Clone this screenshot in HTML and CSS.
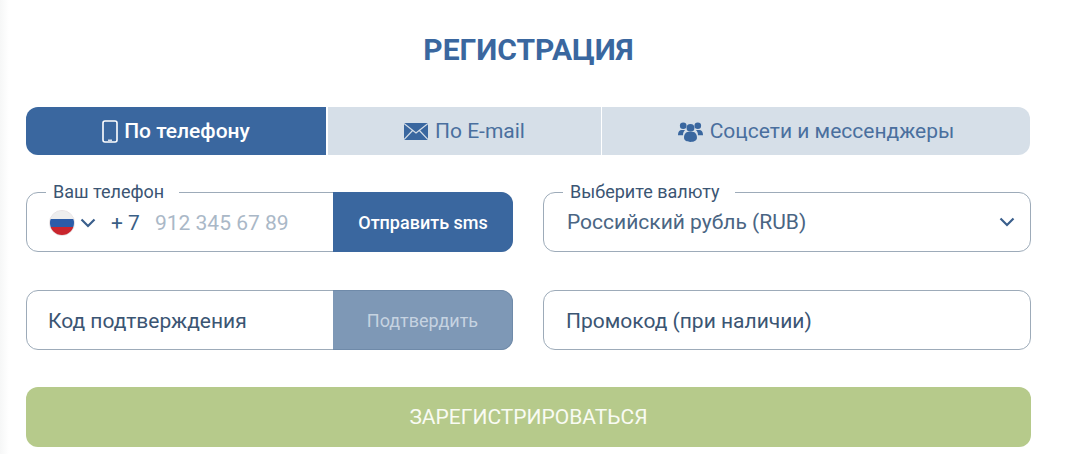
FILE: index.html
```html
<!DOCTYPE html>
<html lang="ru">
<head>
<meta charset="utf-8">
<title>Регистрация</title>
<link rel="stylesheet" href="styles.css">
</head>
<body>
<main class="form">
  <h1 class="title">РЕГИСТРАЦИЯ</h1>
  <div class="tabs">
    <div class="tab tab-phone active">
      <svg class="ico" width="16" height="23" viewBox="0 0 16 23"><rect x="1" y="1" width="14" height="21" rx="2" fill="none" stroke="#fff" stroke-width="1.6"/><path d="M6 20.200h4" stroke="#fff" stroke-width="1.200"/></svg>
      <span>По телефону</span>
    </div>
    <div class="tab tab-mail">
      <svg class="ico" width="24" height="17" viewBox="0 0 24 17"><rect width="24" height="17" fill="#3a679f"/><path d="M0 .5l12 9.500L24 .5M0 16.500l8.600-9M24 16.500l-8.600-9" fill="none" stroke="#d6dfe8" stroke-width="1.200"/></svg>
      <span>По E-mail</span>
    </div>
    <div class="tab tab-social">
      <svg class="ico" width="25" height="21" viewBox="0 0 24 20" fill="#3a679f"><circle cx="5" cy="4.500" r="3.200"/><circle cx="19" cy="4.500" r="3.200"/><circle cx="12" cy="6.500" r="3.800"/><path d="M0 13c0-3 1.500-4.500 3.500-4.500h3.300c-1.300 1.200-2 2.800-2 5H0zM24 13c0-3-1.500-4.500-3.500-4.500h-3.300c1.300 1.200 2 2.800 2 5H24z"/><path d="M5.800 16c0-3.800 2-5.500 4-5.500h4.400c2 0 4 1.700 4 5.500 0 2.500-2.500 4-6.200 4s-6.200-1.500-6.200-4z"/></svg>
      <span>Соцсети и мессенджеры</span>
    </div>
  </div>
  <div class="grid">
    <div class="field">
      <span class="legend legend-phone">Ваш телефон</span>
      <div class="field-body">
        <span class="flag"><i class="w"></i><i class="b"></i><i class="r"></i></span>
        <svg class="chev" width="16" height="10" viewBox="0 0 16 10"><path d="M1.500 1.500l6.500 6.500 6.500-6.500" fill="none" stroke="#3a5f8c" stroke-width="2.200"/></svg>
        <span class="code">+ 7</span>
        <span class="placeholder">912 345 67 89</span>
      </div>
      <div class="side-btn send">Отправить sms</div>
    </div>
    <div class="field">
      <span class="legend legend-cur">Выберите валюту</span>
      <div class="field-body select">
        <span class="value">Российский рубль (RUB)</span>
        <svg class="chev" width="16" height="10" viewBox="0 0 16 10"><path d="M1.500 1.500l6.500 6.500 6.500-6.500" fill="none" stroke="#3a5f8c" stroke-width="2.200"/></svg>
      </div>
    </div>
    <div class="field">
      <div class="field-body plain">Код подтверждения</div>
      <div class="side-btn confirm">Подтвердить</div>
    </div>
    <div class="field">
      <div class="field-body plain promo">Промокод (при наличии)</div>
    </div>
  </div>
  <div class="submit">ЗАРЕГИСТРИРОВАТЬСЯ</div>
</main>
</body>
</html>
```
FILE: styles.css
```css
* { box-sizing: border-box; }
html, body { margin: 0; height: 100%; }
body {
  font-family: Roboto, "Liberation Sans", sans-serif;
  color: #3b5573;
  background: linear-gradient(90deg, #f6f7f7 0, #fff 9px);
  overflow: hidden;
}
.form { width: 1005px; margin-left: 26px; padding-top: 32px; }
.title {
  margin: 0 0 40px;
  height: 35px;
  line-height: 35px;
  font-size: 30px;
  font-weight: 700;
  color: #3a679f;
  text-align: center;
}
.tabs { display: flex; height: 48px; width: 1004px; font-size: 21px; }
.tab {
  display: flex; align-items: center; justify-content: center; gap: 7px;
  background: #d6dfe8; color: #4a6f9e;
}
.tab-phone { width: 300px; gap: 6px; border-radius: 12px 0 0 12px; }
.tab-mail { width: 273px; margin-left: 2px; }
.tab-social { flex: 1; margin-left: 1px; border-radius: 0 12px 12px 0; }
.active { background: #3a679f; color: #fff; font-weight: 500; }
.ico { flex: none; }
.grid {
  display: grid;
  grid-template-columns: 487px 488px;
  column-gap: 30px;
  row-gap: 38px;
  margin-top: 37px;
}
.field {
  position: relative;
  display: flex;
  height: 60px;
  border: 1px solid #9dabb9;
  border-radius: 12px;
  background: #fff;
}
.legend {
  position: absolute;
  top: -10px;
  height: 18px;
  line-height: 18px;
  padding: 0 15px 0 7px;
  background: #fff;
  font-size: 18px;
  color: #3b5573;
}
.legend-phone { left: 19px; }
.legend-cur { left: 19px; }
.field-body {
  flex: 1;
  display: flex;
  align-items: center;
  min-width: 0;
  padding-left: 22px;
  font-size: 21px;
  padding-top: 1px;
}
.flag {
  width: 26px; height: 26px;
  border-radius: 50%;
  overflow: hidden;
  display: flex; flex-direction: column;
  border: 1px solid #e8e2e4;
  background: #eee;
}
.flag i { flex: 1; display: block; }
.flag .w { background: #eeeeee; }
.flag .b { background: #2b5ca8; }
.flag .r { background: #c9252d; }
.chev { flex: none; margin-left: 5px; }
.code { margin-left: 15px; color: #3b5f86; }
.placeholder { margin-left: 15px; color: #aab8c7; }
.select { justify-content: space-between; padding: 0 15px 0 23px; color: #4a6583; }
.plain { padding-left: 21px; color: #3b5573; }
.promo { padding-left: 22px; }
.side-btn {
  flex: none;
  width: 180px;
  margin: -1px -1px -1px 0;
  display: flex; align-items: center; justify-content: center;
  border-radius: 0 12px 12px 0;
  font-size: 18px;
}
.send { background: #3a679f; color: #fff; font-weight: 500; }
.confirm { background: #7e98b6; color: #c6d3e1; border: 1px solid #6f8aa9; border-left: 0; }
.submit {
  margin-top: 37px;
  height: 60px;
  border-radius: 12px;
  background: #b6ca8b;
  color: #f9fbf3;
  font-size: 21px;
  display: flex; align-items: center; justify-content: center;
}
```
